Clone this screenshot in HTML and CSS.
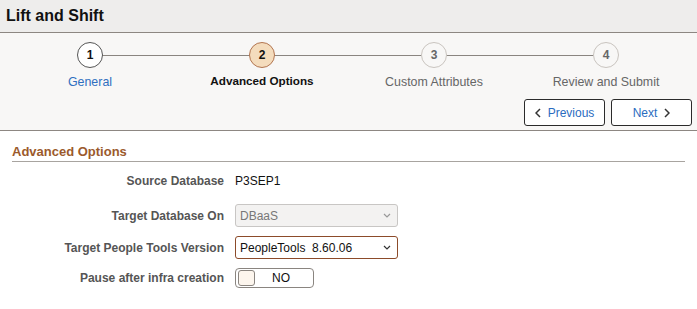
FILE: index.html
```html
<!DOCTYPE html>
<html lang="en">
<head>
  <meta charset="UTF-8">
  <meta name="viewport" content="width=device-width, initial-scale=1.0">
  <title>Lift and Shift</title>
  <link rel="stylesheet" href="styles.css">
</head>
<body>

  <!-- Page title -->
  <div class="page-header">
    <h1>Lift and Shift</h1>
  </div>

  <!-- Step train -->
  <div class="train">
    <div class="steps">
      <div class="step done">
        <span class="circle">1</span>
        <span class="label">General</span>
      </div>
      <div class="step active">
        <span class="circle">2</span>
        <span class="label">Advanced Options</span>
      </div>
      <div class="step">
        <span class="circle">3</span>
        <span class="label">Custom Attributes</span>
      </div>
      <div class="step">
        <span class="circle">4</span>
        <span class="label">Review and Submit</span>
      </div>
    </div>

    <div class="nav-buttons">
      <button class="nav-btn">
        <svg width="6" height="10" viewBox="0 0 6 10"><polyline points="5,1 1,5 5,9" fill="none" stroke="#333" stroke-width="1.5"/></svg>
        Previous
      </button>
      <button class="nav-btn">
        Next
        <svg width="6" height="10" viewBox="0 0 6 10"><polyline points="1,1 5,5 1,9" fill="none" stroke="#333" stroke-width="1.5"/></svg>
      </button>
    </div>
  </div>

  <!-- Form section -->
  <div class="section">
    <h2 class="section-title">Advanced Options</h2>

    <div class="form">
      <div class="row row-source">
        <span class="field-label">Source Database</span>
        <span class="field-value">P3SEP1</span>
      </div>
      <div class="row row-target">
        <span class="field-label">Target Database On</span>
        <div class="select disabled">
          <span>DBaaS</span>
          <svg width="8" height="5" viewBox="0 0 8 5"><polyline points="1,1 4,4 7,1" fill="none" stroke="#999" stroke-width="1.2"/></svg>
        </div>
      </div>
      <div class="row row-tools">
        <span class="field-label">Target People Tools Version</span>
        <div class="select focused">
          <span>PeopleTools&nbsp; 8.60.06</span>
          <svg width="8" height="5" viewBox="0 0 8 5"><polyline points="1,1 4,4 7,1" fill="none" stroke="#333" stroke-width="1.2"/></svg>
        </div>
      </div>
      <div class="row row-pause">
        <span class="field-label">Pause after infra creation</span>
        <div class="toggle">
          <span class="knob"></span>
          <span class="toggle-text">NO</span>
        </div>
      </div>
    </div>
  </div>

</body>
</html>
```

FILE: styles.css
```css
body {
  margin: 0;
  font-family: "Liberation Sans", Arial, sans-serif;
  background-color: #ffffff;
  color: #000;
}

.page-header {
  background-color: #eeedec;
  height: 32px;
  border-bottom: 1px solid #8d8782;
  padding-left: 6px;
}

.page-header h1 {
  margin: 0;
  font-size: 16px;
  font-weight: bold;
  line-height: 32px;
  color: #111;
}

.train {
  background-color: #f8f7f6;
  height: 97px;
  border-bottom: 1px solid #8d8782;
}

.steps {
  display: grid;
  grid-template-columns: repeat(4, 172px);
  margin-left: 4px;
  padding-top: 9px;
}

.step {
  position: relative;
  display: flex;
  flex-direction: column;
  align-items: center;
}

/* connector lines between the circles */
.step:not(:first-child)::before,
.step:not(:last-child)::after {
  content: "";
  position: absolute;
  top: 13px;
  height: 1px;
  background-color: #8a8580;
  width: 50%;
}

.step::before {
  left: 0;
}

.step::after {
  right: 0;
}

.circle {
  position: relative;
  z-index: 1;
  box-sizing: border-box;
  width: 26px;
  height: 26px;
  border-radius: 50%;
  border: 1px solid #c9c4bf;
  background-color: #f8f7f6;
  color: #666;
  font-size: 12px;
  font-weight: bold;
  display: flex;
  align-items: center;
  justify-content: center;
}

.step.done .circle {
  border: 1.5px solid #555;
  background-color: #fff;
  color: #111;
}

.step.active .circle {
  border: 1.5px solid #b27550;
  background-color: #f4dcbd;
  color: #111;
}

.label {
  margin-top: 7px;
  font-size: 12.4px;
  line-height: 15px;
  color: #666;
}

.step.done .label {
  color: #2f6fc0;
}

.step.active .label {
  margin-top: 5px;
  font-size: 11.7px;
  font-weight: bold;
  color: #111;
}

.nav-buttons {
  display: flex;
  justify-content: flex-end;
  gap: 6px;
  padding-right: 5px;
  margin-top: 9px;
}

.nav-btn {
  box-sizing: border-box;
  width: 81px;
  height: 27px;
  background-color: #fff;
  border: 1px solid #2b2b2b;
  border-radius: 3px;
  font-family: inherit;
  font-size: 12px;
  color: #2a6cc0;
  display: flex;
  align-items: center;
  justify-content: center;
  gap: 7px;
  padding: 0;
  cursor: pointer;
}

.section {
  padding: 0 12px;
}

.section-title {
  margin: 12px 0 0;
  font-size: 13px;
  font-weight: bold;
  line-height: 17px;
  color: #9b5a2c;
  padding-bottom: 1px;
  border-bottom: 1px solid #a8a4a0;
}

.form {
  display: flex;
  flex-direction: column;
}

.row {
  display: grid;
  grid-template-columns: 212px auto;
  column-gap: 11px;
  align-items: center;
}

.row-source {
  margin-top: 9px;
  height: 20px;
}

.row-target {
  margin-top: 13px;
}

.row-tools {
  margin-top: 9px;
}

.row-pause {
  margin-top: 9px;
}

.field-label {
  text-align: right;
  font-size: 12px;
  font-weight: bold;
  color: #555;
}

.field-value {
  font-size: 12px;
  color: #111;
}

.select {
  box-sizing: border-box;
  width: 163px;
  height: 23px;
  border-radius: 3px;
  display: flex;
  align-items: center;
  justify-content: space-between;
  padding: 0 6px 0 4px;
  font-size: 12px;
}

.select.disabled {
  background-color: #f3f2f1;
  border: 1px solid #c8c6c4;
  color: #777;
}

.select.focused {
  background-color: #fff;
  border: 1px solid #8c4b2a;
  color: #111;
}

.toggle {
  box-sizing: border-box;
  width: 79px;
  height: 20px;
  border: 1px solid #8a8580;
  border-radius: 4px;
  display: flex;
  align-items: center;
  padding-left: 2px;
}

.knob {
  box-sizing: border-box;
  width: 17px;
  height: 16px;
  border: 1px solid #8a8580;
  border-radius: 3px;
  background-color: #fdf6ee;
}

.toggle-text {
  flex: 1;
  text-align: center;
  font-size: 12px;
  color: #111;
  padding-right: 6px;
}
```
